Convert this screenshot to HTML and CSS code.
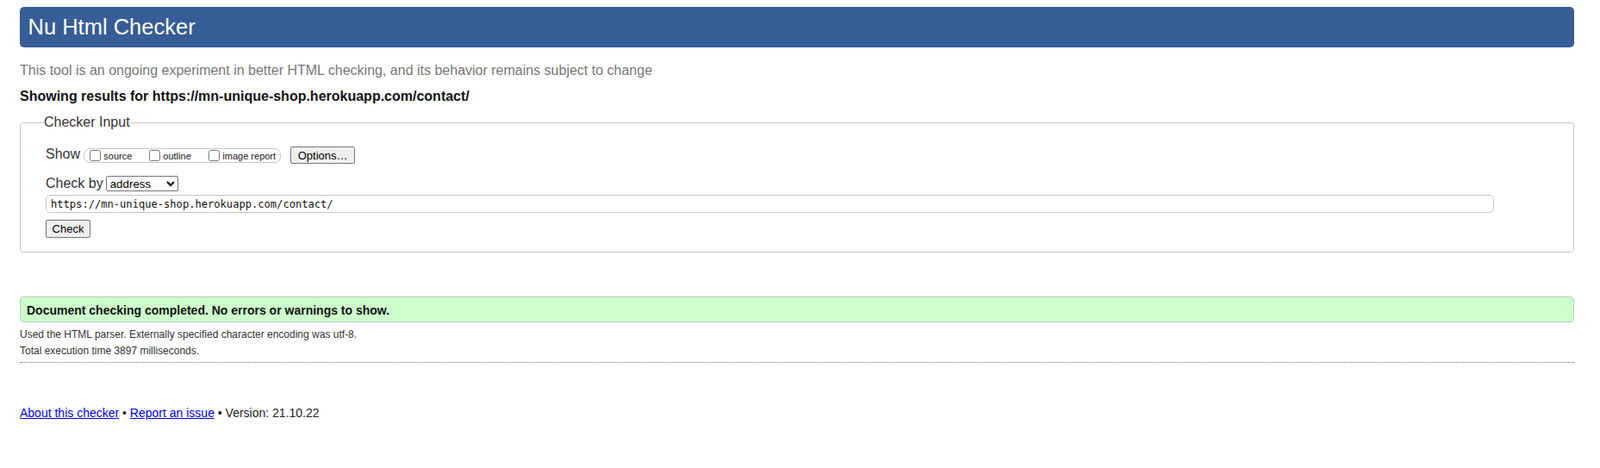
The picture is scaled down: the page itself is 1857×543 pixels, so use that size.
FILE: index.html
```html
<!DOCTYPE html>
<html lang="en">
<head>
<meta charset="utf-8">
<title>Nu Html Checker</title>
<link rel="stylesheet" href="styles.css">
</head>
<body>
<h1 class="banner">Nu Html Checker</h1>
<p class="tagline">This tool is an ongoing experiment in better HTML checking, and its behavior remains subject to change</p>
<p class="results-for">Showing results for https://mn-unique-shop.herokuapp.com/contact/</p>
<form class="checker-form">
  <fieldset class="checker-input">
    <legend class="checker-legend">Checker Input</legend>
    <div class="show-row">
      <span class="row-label show-label">Show</span>
      <div class="show-options">
        <label class="opt"><input type="checkbox"><span>source</span></label>
        <label class="opt"><input type="checkbox"><span>outline</span></label>
        <label class="opt"><input type="checkbox"><span>image report</span></label>
      </div>
      <button type="button" class="btn btn-options">Options…</button>
    </div>
    <div class="checkby-row">
      <label class="row-label checkby-label" for="docselect">Check by</label>
      <select id="docselect" class="doc-select"><option>address</option></select>
    </div>
    <input class="url-input" type="url" value="https://mn-unique-shop.herokuapp.com/contact/">
    <button type="button" class="btn btn-check">Check</button>
  </fieldset>
</form>
<p class="success">Document checking completed. No errors or warnings to show.</p>
<p class="details details-first">Used the HTML parser. Externally specified character encoding was utf-8.</p>
<p class="details">Total execution time 3897 milliseconds.</p>
<div class="divider"></div>
<p class="footer"><a href="#">About this checker</a> • <a href="#">Report an issue</a> • Version: 21.10.22</p>
</body>
</html>
```
FILE: styles.css
```css
* {
  box-sizing: border-box;
}

body {
  margin: 0;
  padding: 8px 30px 0 23px;
  font-family: "Liberation Sans", Arial, sans-serif;
  color: #222;
  background: #fff;
}

.banner {
  margin: 0;
  height: 47px;
  line-height: 47px;
  padding-left: 9.5px;
  background: #365d95;
  color: #fff;
  font-size: 25.5px;
  font-weight: normal;
  border-radius: 5px;
}

.tagline {
  margin: 16.5px 0 0;
  font-size: 16px;
  line-height: 20px;
  color: #777;
}

.results-for {
  margin: 10px 0 0;
  font-size: 16px;
  line-height: 20px;
  font-weight: bold;
  color: #111;
}

.checker-form {
  margin: 10.8px 0 0;
}

.checker-input {
  margin: 0;
  min-width: 0;
  padding: 18.2px 29px 16.3px 29px;
  border: 1px solid #c8c8c8;
  border-radius: 4px;
}

.checker-legend {
  padding: 0;
  margin-left: -2px;
  font-size: 16px;
  line-height: 20px;
  color: #333;
}

.show-row {
  display: flex;
  align-items: center;
  height: 20px;
}

.row-label {
  align-self: flex-start;
  font-size: 16px;
  line-height: 18px;
  color: #333;
}

.show-label {
  margin-right: 4.3px;
}

.show-options {
  display: flex;
  align-items: center;
  height: 17.6px;
  padding: 0 5px 0 2px;
  margin-right: 11px;
  border: 1px solid #c8c8c8;
  border-radius: 7px;
}

.opt {
  display: flex;
  align-items: center;
  min-width: 69px;
  font-size: 11px;
  color: #222;
}

.opt input {
  margin: 0 3px 0 4px;
  width: 13px;
  height: 13px;
}

.opt span {
  padding-top: 1.5px;
}

.btn {
  font-family: "Liberation Sans", Arial, sans-serif;
  font-size: 13px;
  color: #000;
  background: #efefef;
  border: 1px solid #767676;
  border-radius: 2px;
  padding: 0;
}

.btn-options {
  width: 75px;
  height: 20px;
}

.checkby-row {
  display: flex;
  align-items: flex-start;
  height: 18px;
  margin-top: 13.55px;
}

.checkby-label {
  margin-right: 3px;
}

.doc-select {
  width: 84px;
  height: 18px;
  margin: 0;
  font-family: "Liberation Sans", Arial, sans-serif;
  font-size: 13.33px;
  color: #000;
}

.url-input {
  display: block;
  margin-top: 4px;
  width: 1681px;
  height: 21px;
  padding: 0 5px;
  border: 1px solid #c8c8c8;
  border-radius: 5px;
  font-family: "DejaVu Sans Mono", "Liberation Mono", monospace;
  font-size: 12.1px;
  color: #111;
}

.btn-check {
  display: block;
  margin-top: 8.3px;
  width: 52px;
  height: 20.4px;
}

.success {
  margin: 51px 0 0;
  padding: 2px 7px 0;
  line-height: 26px;
  font-size: 14px;
  font-weight: bold;
  color: #111;
  background: #ccffcc;
  border: 1px solid #c0c8c0;
  border-radius: 4px;
}

.details {
  margin: 0;
  font-size: 12px;
  line-height: 19px;
  color: #333;
}

.details-first {
  margin-top: 4.7px;
}

.divider {
  margin-top: 3.5px;
  border-top: 1px dotted #666;
}

.footer {
  margin: 49px 0 0;
  font-size: 14px;
  line-height: 18px;
  color: #222;
}

.footer a {
  color: #0000ee;
  text-decoration: underline;
}
```
